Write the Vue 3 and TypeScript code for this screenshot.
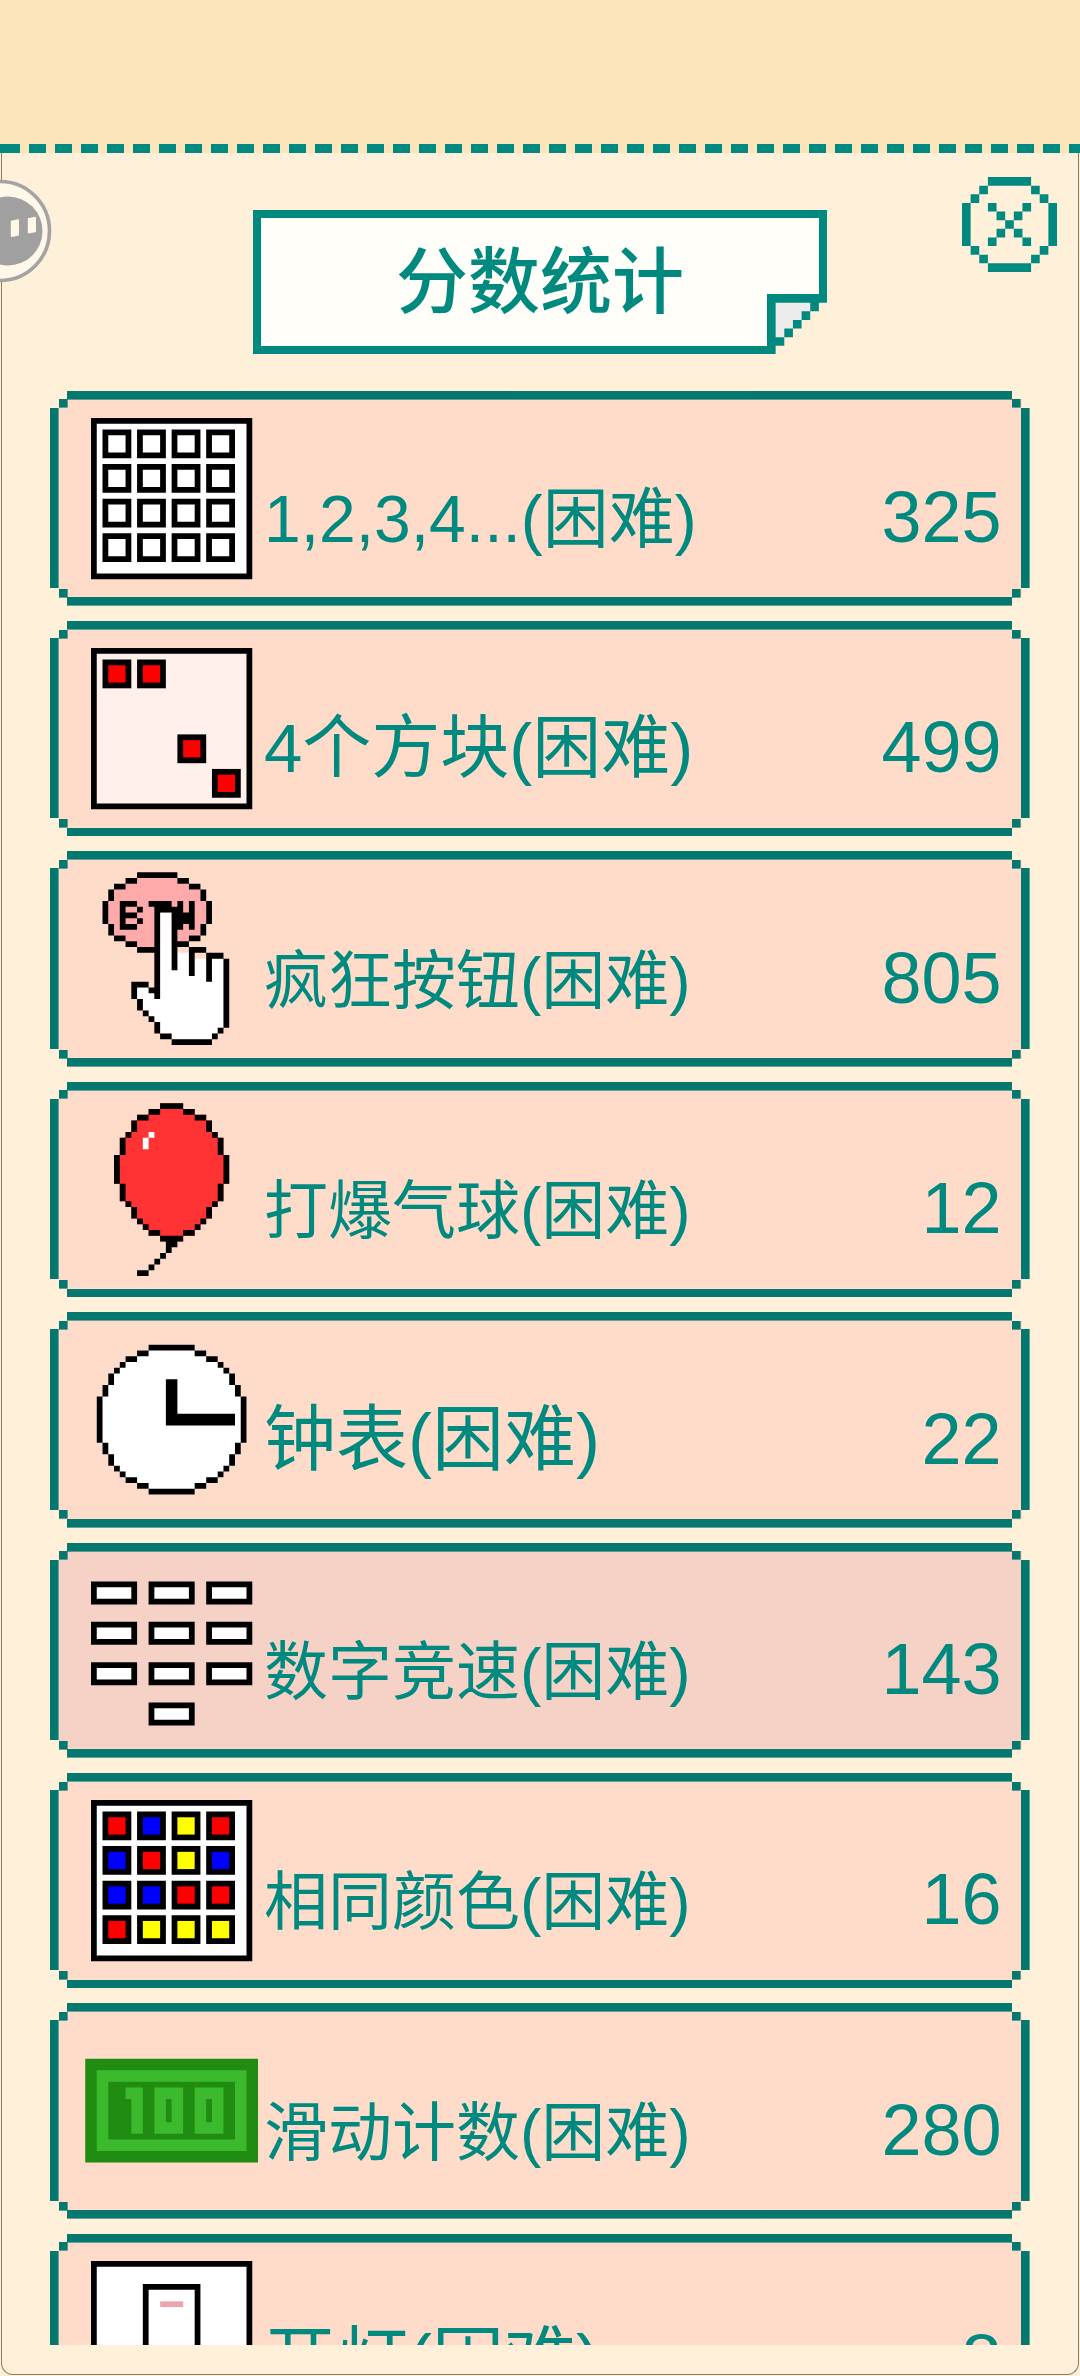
<template>
  <div class="page">
    <div class="top-band"></div>
    <div class="dash-line"></div>
    <div class="panel">
      <svg class="float-btn" viewBox="0 0 52 104" width="52" height="104">
        <circle cx="0" cy="52" r="49.5" fill="#fff7e8" stroke="#a3a3a3" stroke-width="3.6" />
        <circle cx="8" cy="52" r="34.5" fill="#a0a0a0" />
        <path d="M12 41.5l6-1.2a1 1 0 0 1 1 1v14.5a1 1 0 0 1-.8 1l-6.4 1.2a1 1 0 0 1-1-1v-14.3a1 1 0 0 1 1.2-1.2z" fill="#fff7e8" />
        <path d="M29 39l6-1.2a1 1 0 0 1 1 1v13.5a1 1 0 0 1-.8 1l-6.4 1.2a1 1 0 0 1-1-1v-13.3a1 1 0 0 1 1.2-1.2z" fill="#fff7e8" />
      </svg>

      <svg class="close-btn" viewBox="0 0 11 11" width="95" height="95">
        <path :d="closePath" fill="#00897f" />
      </svg>

      <div class="title-box">
        <span class="title-text">分数统计</span>
        <svg class="title-fold" viewBox="0 0 7 7" width="60.5" height="60.5">
          <path :d="r(0, 0, 7, 7)" fill="#fff0d9" />
          <path :d="foldFill" fill="#ececec" />
          <path :d="foldPath" fill="#00897f" />
        </svg>
      </div>

      <div class="list">
        <div v-for="item in items" :key="item.id" class="card" :class="{ 'is-active': item.active }">
          <div class="card-icon">
            <svg viewBox="0 0 28 28" width="161.28" height="161.28">
              <template v-if="item.id === 'order'">
                <path :d="frame" fill="#000" />
                <path :d="frameInner" fill="#fff" />
                <path :d="gridOuter" fill="#000" />
                <path :d="gridInner" fill="#fff" />
              </template>

              <template v-else-if="item.id === 'blocks'">
                <path :d="frame" fill="#000" />
                <path :d="frameInner" fill="#fff0ec" />
                <template v-for="b in blocks" :key="b[0] + '-' + b[1]">
                  <path :d="r(b[0], b[1], 5, 5)" fill="#000" />
                  <path :d="r(b[0] + 1, b[1] + 1, 3, 3)" fill="#f00" />
                </template>
              </template>

              <g v-else-if="item.id === 'button'" transform="translate(2,-1)">
                <path :d="btnFill" fill="#ffaaaa" />
                <path :d="handFill" fill="#fff" />
                <path :d="handLines" fill="#000" />
              </g>

              <g v-else-if="item.id === 'balloon'" transform="translate(4,-1)">
                <path :d="balloonFill" fill="#ff3333" />
                <path :d="balloonLines" fill="#000" />
                <path :d="r(6, 5, 1, 1) + r(5, 6, 1, 2)" fill="#fff" />
              </g>

              <template v-else-if="item.id === 'clock'">
                <path :d="clockFill" fill="#fff" />
                <path :d="clockLines" fill="#000" />
                <path :d="r(13, 7, 2, 8) + r(15, 13, 10, 2)" fill="#000" />
              </template>

              <template v-else-if="item.id === 'keypad'">
                <template v-for="k in keys" :key="k[0] + '-' + k[1]">
                  <path :d="r(k[0], k[1], 8, 4)" fill="#000" />
                  <path :d="r(k[0] + 1, k[1] + 1, 6, 2)" fill="#fff" />
                </template>
              </template>

              <template v-else-if="item.id === 'color'">
                <path :d="frame" fill="#000" />
                <path :d="frameInner" fill="#fff" />
                <path :d="gridOuter" fill="#000" />
                <path v-for="c in colorCells" :key="c.x + '-' + c.y" :d="r(c.x + 1, c.y + 1, 3, 3)" :fill="c.color" />
              </template>

              <template v-else-if="item.id === 'money'">
                <path :d="r(-1, 5, 30, 18)" fill="#218c12" />
                <path :d="r(1, 7, 26, 14)" fill="#3bba2d" />
                <path :d="r(3, 9, 22, 10)" fill="#218c12" />
                <path :d="moneyDigits" fill="#3bba2d" fill-rule="evenodd" />
              </template>

              <template v-else>
                <path :d="frame" fill="#000" />
                <path :d="frameInner" fill="#fff" />
                <path :d="r(9, 4, 10, 24)" fill="#000" />
                <path :d="r(10, 5, 8, 22)" fill="#fff" />
                <path :d="r(12, 7, 4, 1)" fill="#eaa6ac" />
              </template>
            </svg>
          </div>
          <div class="card-info">
            <span class="card-label" :style="{ fontSize: item.labelSize + 'px' }">{{ item.label }}</span>
            <span class="card-score">{{ item.score }}</span>
          </div>
        </div>
      </div>
    </div>
  </div>
</template>

<script setup lang="ts">
type Span = [number, number, number, number?];

interface ScoreItem {
  id: string;
  label: string;
  labelSize: number;
  score: number;
  active?: boolean;
}

// labels are fitted to the same width, up to a max size
const items: ScoreItem[] = [
  { id: 'order', label: '1,2,3,4...(困难)', labelSize: 66, score: 325 },
  { id: 'blocks', label: '4个方块(困难)', labelSize: 69, score: 499 },
  { id: 'button', label: '疯狂按钮(困难)', labelSize: 64, score: 805 },
  { id: 'balloon', label: '打爆气球(困难)', labelSize: 64, score: 12 },
  { id: 'clock', label: '钟表(困难)', labelSize: 72, score: 22 },
  { id: 'keypad', label: '数字竞速(困难)', labelSize: 64, score: 143, active: true },
  { id: 'color', label: '相同颜色(困难)', labelSize: 64, score: 16 },
  { id: 'money', label: '滑动计数(困难)', labelSize: 64, score: 280 },
  { id: 'light', label: '开灯(困难)', labelSize: 72, score: 8 }
];

const r = (x: number, y: number, w: number, h: number) => `M${x} ${y}h${w}v${h}h${-w}z`;

// [x, y, w, h = 1]
const toPath = (list: Span[]) => list.map(([x, y, w, h]) => r(x, y, w, h ?? 1)).join('');

const frame = r(0, 0, 28, 28);
const frameInner = r(1, 1, 26, 26);

const slots = [2, 8, 14, 20];
const gridOuter = slots.flatMap((y) => slots.map((x) => r(x, y, 5, 5))).join('');
const gridInner = slots.flatMap((y) => slots.map((x) => r(x + 1, y + 1, 3, 3))).join('');

const blocks = [
  [2, 2],
  [8, 2],
  [15, 15],
  [21, 21]
];

const keys = [
  [0, 2], [10, 2], [20, 2],
  [0, 9], [10, 9], [20, 9],
  [0, 16], [10, 16], [20, 16],
  [10, 23]
];

const palette: Record<string, string> = { R: '#ff0000', B: '#0000ff', Y: '#ffff00' };
const colorRows = ['RBYR', 'BRYB', 'BBRR', 'RYYY'];
const colorCells = colorRows.flatMap((row, ry) =>
  row.split('').map((c, rx) => ({ x: slots[rx], y: slots[ry], color: palette[c] }))
);

const closePath = toPath([
  [3, 0, 5], [2, 1, 1], [8, 1, 1], [1, 2, 1], [9, 2, 1],
  [0, 3, 1, 5], [10, 3, 1, 5],
  [1, 8, 1], [9, 8, 1], [2, 9, 1], [8, 9, 1], [3, 10, 5],
  [3, 3, 1], [7, 3, 1], [4, 4, 1], [6, 4, 1], [5, 5, 1],
  [4, 6, 1], [6, 6, 1], [3, 7, 1], [7, 7, 1]
]);

const foldFill = toPath([[1, 1, 4], [1, 2, 3], [1, 3, 2], [1, 4, 1]]);
const foldPath = toPath([
  [0, 0, 7], [0, 0, 1, 7], [5, 1, 1], [4, 2, 1], [3, 3, 1], [2, 4, 1], [1, 5, 1]
]);

const btnFill = toPath([
  [6, 1, 7], [4, 2, 11], [2, 3, 15], [2, 4, 15], [1, 5, 17], [1, 6, 17], [1, 7, 17], [1, 8, 17],
  [2, 9, 15], [2, 10, 15], [4, 11, 11], [6, 12, 7]
]);

const handFill = toPath([
  [10, 7, 2, 7],
  [13, 14, 2, 3], [16, 15, 5, 3], [10, 14, 2, 3], [10, 17, 5, 1], [16, 17, 5, 1],
  [10, 18, 8, 1], [19, 18, 2, 1],
  [10, 19, 11, 1],
  [6, 20, 2, 1], [10, 20, 11, 1],
  [6, 21, 3, 1], [10, 21, 11, 1],
  [7, 22, 14, 2],
  [8, 24, 13, 1], [9, 25, 12, 1], [10, 26, 11, 1], [10, 27, 10, 1], [12, 28, 7, 1]
]);

const handLines = toPath([
  // ellipse
  [6, 0, 7], [4, 1, 2], [13, 1, 2], [2, 2, 2], [15, 2, 2], [1, 3, 1, 2], [17, 3, 1, 2],
  [0, 5, 1, 4], [18, 5, 1, 4], [1, 9, 1, 2], [17, 9, 1, 2], [2, 11, 2], [15, 11, 2],
  [4, 12, 2], [13, 12, 2], [6, 13, 3],
  // B
  [3, 5, 3], [3, 6, 1], [6, 6, 1], [3, 7, 3], [3, 8, 1], [6, 8, 1], [3, 9, 3],
  // T
  [8, 5, 4], [9, 6, 4],
  // N
  [13, 5, 1, 5], [15, 5, 1, 5], [14, 7, 1, 2],
  // hand
  [9, 6, 1, 16], [12, 6, 1, 11], [15, 13, 3], [15, 14, 1, 4], [18, 14, 3], [18, 15, 1, 4],
  [21, 15, 1, 12], [5, 19, 3], [8, 20, 1], [5, 20, 1, 2], [6, 22, 1, 2], [7, 24, 1], [8, 25, 1],
  [9, 26, 1, 2], [10, 28, 2], [12, 29, 7], [19, 28, 1], [20, 27, 1]
]);

// left and right outline column of each balloon row
const balloonEdges: [number, number, number, number][] = [
  [8, 11, 8, 11], [6, 7, 12, 13], [4, 5, 14, 15], [3, 3, 16, 16], [3, 3, 16, 16], [2, 2, 17, 17],
  [1, 1, 18, 18], [1, 1, 18, 18], [1, 1, 18, 18],
  [0, 0, 19, 19], [0, 0, 19, 19], [0, 0, 19, 19], [0, 0, 19, 19], [0, 0, 19, 19],
  [1, 1, 18, 18], [1, 1, 18, 18], [1, 1, 18, 18], [2, 2, 17, 17], [3, 3, 16, 16], [3, 3, 16, 16],
  [4, 4, 15, 15], [5, 5, 14, 14], [6, 7, 12, 13], [8, 11, 8, 11]
];
const balloonFill = balloonEdges.map(([a, , , d], y) => r(a, y, d - a + 1, 1)).join('');
const balloonLines =
  balloonEdges
    .map(([a, b, c, d], y) => r(a, y, b - a + 1, 1) + r(c, y, d - c + 1, 1))
    .join('') + toPath([[9, 24, 2], [9, 25, 1], [8, 26, 1], [7, 27, 1], [6, 28, 1], [4, 29, 2]]);

// pixel circle, 26 units across, starting at (1,1)
const spans = Array.from({ length: 26 }, (_, i) => {
  const dy = i + 0.5 - 13;
  const half = Math.round(Math.sqrt(169 - dy * dy));
  return [13 - half, 13 + half];
});
const clockFill = spans.map(([a, b], i) => r(a + 1, i + 1, b - a, 1)).join('');
const clockLines = spans
  .map(([a, b], i) => {
    const prev = spans[i - 1] ?? [13, 13];
    const next = spans[i + 1] ?? [13, 13];
    const w = Math.max(1, Math.max(prev[0], next[0]) - a);
    return r(a + 1, i + 1, w, 1) + r(b + 1 - w, i + 1, w, 1);
  })
  .join('');

const moneyDigits =
  toPath([[7, 10, 2, 8], [6, 10, 1, 2]]) +
  r(11, 10, 5, 8) + r(13, 12, 1, 4) +
  r(18, 10, 5, 8) + r(20, 12, 1, 4);
</script>

<style>
html,
body {
  margin: 0;
  background: #fff0d9;
}
</style>

<style scoped>
.page {
  display: flex;
  flex-direction: column;
  width: 1080px;
  height: 2376px;
  overflow: hidden;
  font-family: 'Liberation Sans', 'Noto Sans CJK SC', sans-serif;
}

.top-band {
  flex: none;
  height: 144px;
  background: #fce4bb;
}

.dash-line {
  flex: none;
  height: 8.64px;
  background: repeating-linear-gradient(90deg, #00897f 0 17.3px, #fce4bb 17.3px 26px) 3px 0;
}

.panel {
  position: relative;
  flex: 1;
  min-height: 0;
  display: flex;
  flex-direction: column;
  align-items: center;
  margin: 0 1px 1px;
  border: 1px solid #8d7b5c;
  border-top: none;
  border-radius: 0 0 12px 12px;
  background: #fff0d9;
}

.float-btn {
  position: absolute;
  left: -2px;
  top: 26px;
}

.close-btn {
  position: absolute;
  right: 21px;
  top: 24px;
}

.title-box {
  position: relative;
  flex: none;
  display: flex;
  align-items: center;
  justify-content: center;
  box-sizing: border-box;
  width: 574.5px;
  height: 144px;
  margin-top: 57px;
  border: solid #00897f;
  border-width: 8.64px 8px;
  background: #fffef8;
}

.title-text {
  color: #00897f;
  font-size: 72px;
  font-weight: 500;
  line-height: 1;
}

.title-fold {
  position: absolute;
  right: -8px;
  bottom: -8.64px;
}

.list {
  flex: 1;
  min-height: 0;
  align-self: stretch;
  display: flex;
  flex-direction: column;
  gap: 15px;
  margin: 37px 48.4px 29px;
  overflow: hidden;
}

.card {
  --p: 8.64px;
  --edge: linear-gradient(#04786e, #04786e);
  --fill: #ffdbca;
  flex: none;
  display: flex;
  align-items: center;
  box-sizing: border-box;
  height: 215.4px;
  padding: 0 28px 0 40.3px;
  background-repeat: no-repeat;
  background-image: var(--edge), var(--edge), var(--edge), var(--edge), var(--edge), var(--edge),
    var(--edge), var(--edge), linear-gradient(var(--fill), var(--fill));
  background-size: calc(100% - 4 * var(--p)) var(--p), calc(100% - 4 * var(--p)) var(--p),
    var(--p) calc(100% - 4 * var(--p)), var(--p) calc(100% - 4 * var(--p)), var(--p) var(--p),
    var(--p) var(--p), var(--p) var(--p), var(--p) var(--p),
    calc(100% - 2 * var(--p)) calc(100% - 2 * var(--p));
  background-position: center top, center bottom, left center, right center,
    left var(--p) top var(--p), right var(--p) top var(--p), left var(--p) bottom var(--p),
    right var(--p) bottom var(--p), center;
}

.card.is-active {
  --fill: #f5d2c5;
}

.card-icon {
  flex: none;
  width: 161.28px;
  height: 161.28px;
}

.card-icon svg {
  display: block;
  overflow: visible;
}

.card-info {
  flex: 1;
  min-width: 0;
  align-self: flex-end;
  display: flex;
  align-items: baseline;
  justify-content: space-between;
  margin: 0 0 49px 12px;
  color: #00897f;
}

.card-label {
  line-height: 70px;
  white-space: nowrap;
}

.card-score {
  font-size: 72px;
  line-height: 80px;
}
</style>
